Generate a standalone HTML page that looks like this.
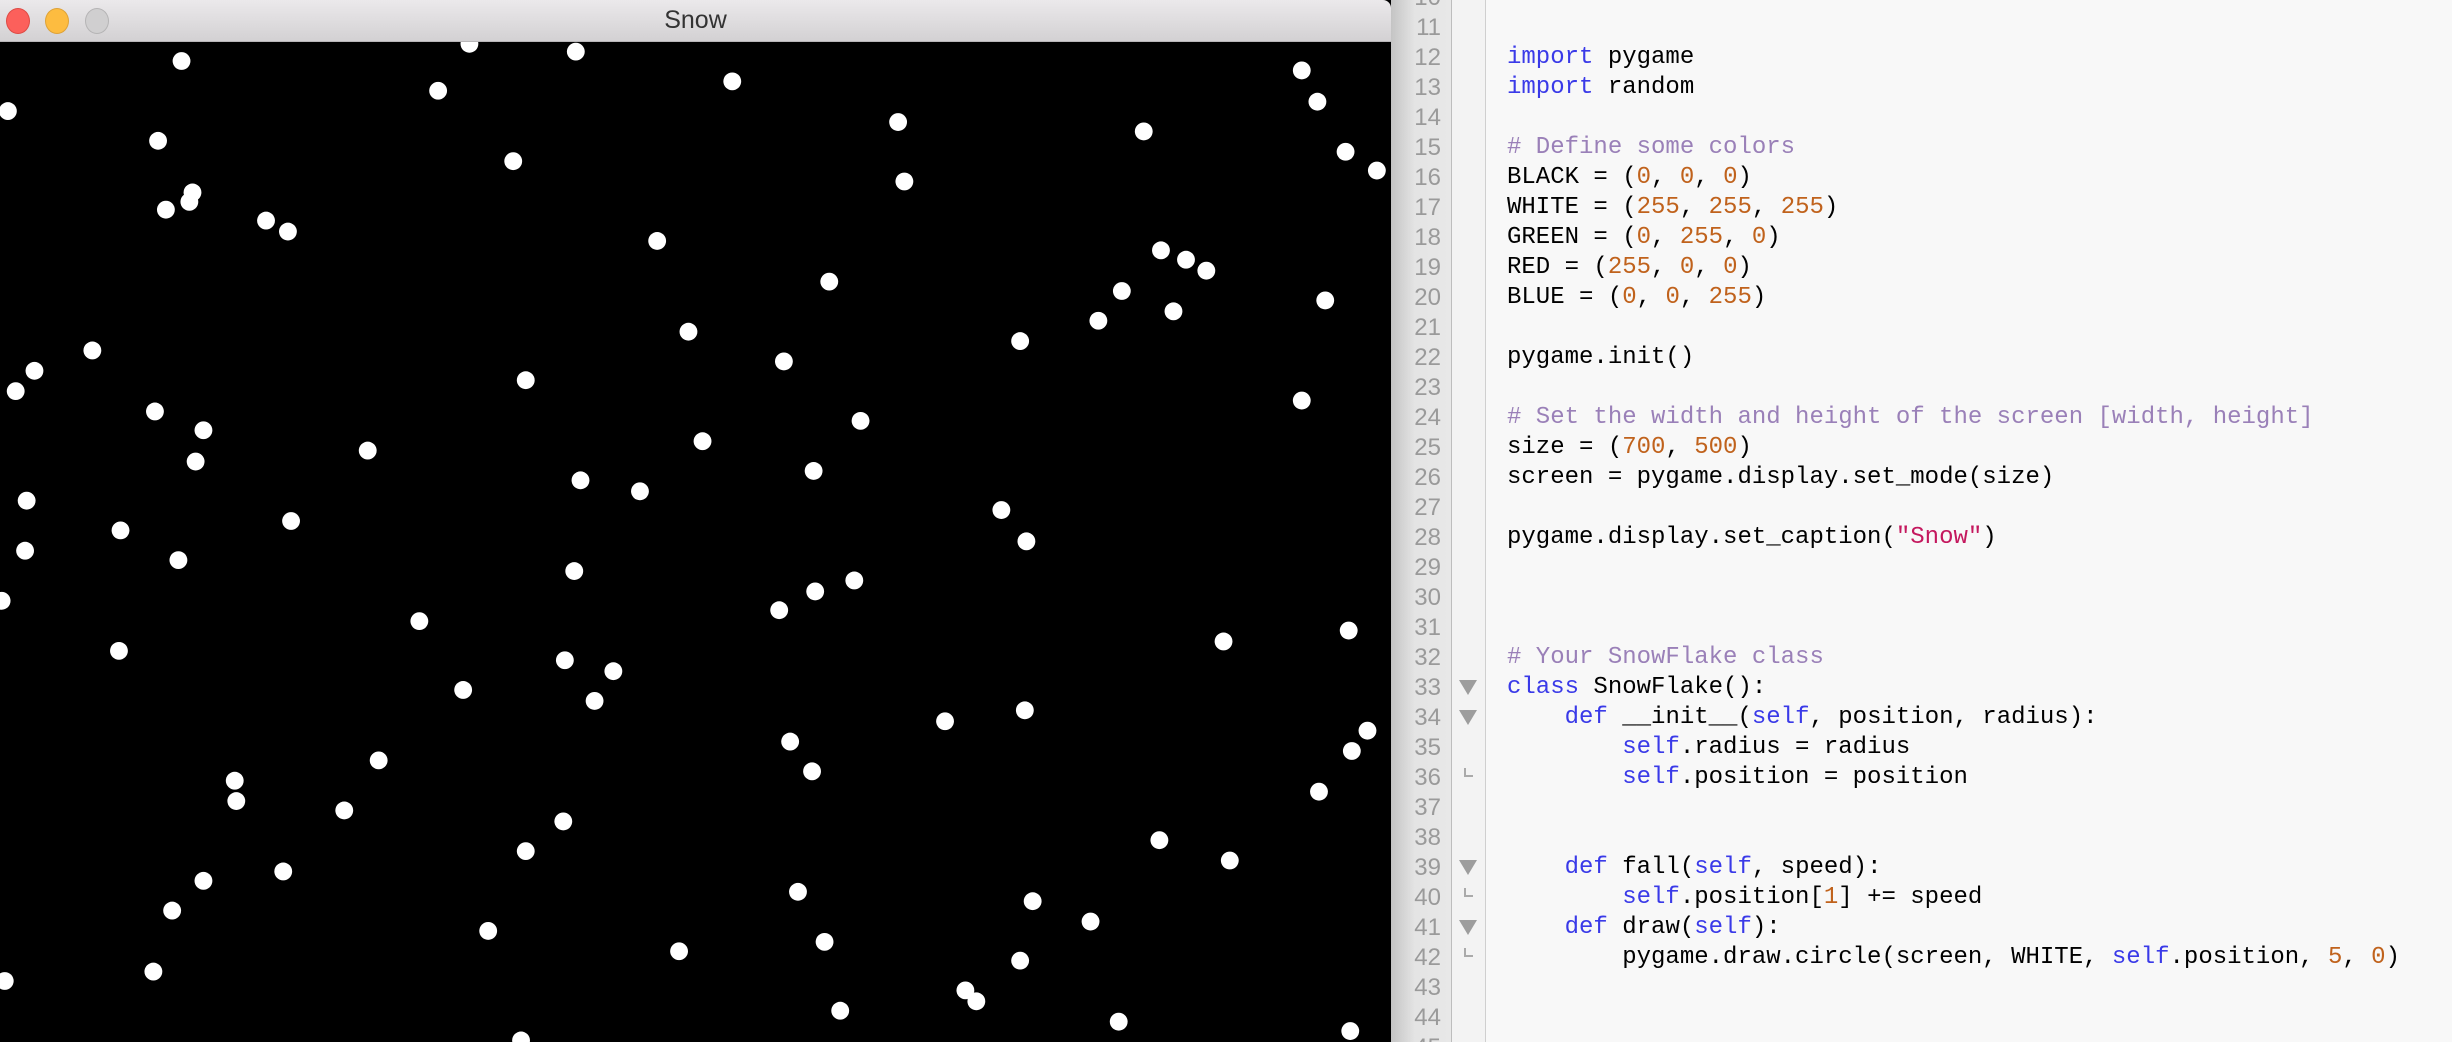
<!DOCTYPE html>
<html style="overflow:hidden;height:1042px"><head><meta charset="utf-8"><style>
body{margin:0;width:2452px;height:1042px;overflow:hidden;background:#f8f8f8;font-family:"Liberation Sans",sans-serif}
#wrap{position:relative;width:2452px;height:1042px;overflow:hidden;background:#f8f8f8}
#win{position:absolute;left:0;top:0;width:1391px;height:1042px;background:#000}
#tb{position:absolute;left:0;top:0;width:1391px;height:41px;background:linear-gradient(#ebe9eb,#d3d1d3);border-bottom:1px solid #b8b6b8;border-top-right-radius:8px}
.dot{position:absolute;top:8px;width:22px;height:24px;border-radius:50%}
#title{position:absolute;left:0;right:0;top:6px;text-align:center;font-size:25px;color:#333}
#gut{position:absolute;left:1391px;top:0;width:60px;height:1042px;background:linear-gradient(90deg,#c4c4c4,#e4e4e4 40%,#e8e8e8);border-right:1px solid #bdbdbd}
#fold{position:absolute;left:1452px;top:0;width:33px;height:1042px;background:#f3f3f3;border-right:1px solid #cfcfcf}
.ln{position:absolute;left:1391px;width:50px;text-align:right;font-size:24px;color:#9a9a9a;height:30px;line-height:30px}
.cl{position:absolute;left:1507px;font-family:"Liberation Mono",monospace;font-size:24px;white-space:pre;color:#000;height:30px;line-height:30px}
.k{color:#3a3ae8}.c{color:#9a80b8}.n{color:#c0621c}.s{color:#c4185e}
.tri{position:absolute;left:1459px;width:0;height:0;border-left:9px solid transparent;border-right:9px solid transparent;border-top:15px solid #9d9d9d}
.end{position:absolute;left:1464px;width:7px;height:7px;border-left:2px solid #aaa;border-bottom:2px solid #aaa}
</style></head><body><div id="wrap">
<div id="win">
<svg width="1391" height="1042" viewBox="0 0 889 666" style="position:absolute;left:0;top:0">
<g fill="#fff">
<circle cx="116" cy="39" r="5.7"/><circle cx="300" cy="28" r="5.7"/><circle cx="368" cy="33" r="5.7"/><circle cx="5" cy="71" r="5.7"/><circle cx="280" cy="58" r="5.7"/><circle cx="468" cy="52" r="5.7"/><circle cx="832" cy="45" r="5.7"/><circle cx="842" cy="65" r="5.7"/><circle cx="574" cy="78" r="5.7"/><circle cx="731" cy="84" r="5.7"/><circle cx="101" cy="90" r="5.7"/><circle cx="328" cy="103" r="5.7"/><circle cx="860" cy="97" r="5.7"/><circle cx="880" cy="109" r="5.7"/><circle cx="578" cy="116" r="5.7"/><circle cx="123" cy="123" r="5.7"/><circle cx="121" cy="129" r="5.7"/><circle cx="106" cy="134" r="5.7"/><circle cx="170" cy="141" r="5.7"/><circle cx="184" cy="148" r="5.7"/><circle cx="420" cy="154" r="5.7"/><circle cx="742" cy="160" r="5.7"/><circle cx="758" cy="166" r="5.7"/><circle cx="771" cy="173" r="5.7"/><circle cx="530" cy="180" r="5.7"/><circle cx="717" cy="186" r="5.7"/><circle cx="847" cy="192" r="5.7"/><circle cx="750" cy="199" r="5.7"/><circle cx="702" cy="205" r="5.7"/><circle cx="440" cy="212" r="5.7"/><circle cx="652" cy="218" r="5.7"/><circle cx="59" cy="224" r="5.7"/><circle cx="501" cy="231" r="5.7"/><circle cx="22" cy="237" r="5.7"/><circle cx="10" cy="250" r="5.7"/><circle cx="336" cy="243" r="5.7"/><circle cx="832" cy="256" r="5.7"/><circle cx="99" cy="263" r="5.7"/><circle cx="550" cy="269" r="5.7"/><circle cx="130" cy="275" r="5.7"/><circle cx="449" cy="282" r="5.7"/><circle cx="235" cy="288" r="5.7"/><circle cx="125" cy="295" r="5.7"/><circle cx="520" cy="301" r="5.7"/><circle cx="371" cy="307" r="5.7"/><circle cx="409" cy="314" r="5.7"/><circle cx="17" cy="320" r="5.7"/><circle cx="640" cy="326" r="5.7"/><circle cx="186" cy="333" r="5.7"/><circle cx="77" cy="339" r="5.7"/><circle cx="656" cy="346" r="5.7"/><circle cx="16" cy="352" r="5.7"/><circle cx="114" cy="358" r="5.7"/><circle cx="367" cy="365" r="5.7"/><circle cx="546" cy="371" r="5.7"/><circle cx="521" cy="378" r="5.7"/><circle cx="1" cy="384" r="5.7"/><circle cx="498" cy="390" r="5.7"/><circle cx="268" cy="397" r="5.7"/><circle cx="782" cy="410" r="5.7"/><circle cx="862" cy="403" r="5.7"/><circle cx="76" cy="416" r="5.7"/><circle cx="361" cy="422" r="5.7"/><circle cx="392" cy="429" r="5.7"/><circle cx="296" cy="441" r="5.7"/><circle cx="380" cy="448" r="5.7"/><circle cx="655" cy="454" r="5.7"/><circle cx="604" cy="461" r="5.7"/><circle cx="505" cy="474" r="5.7"/><circle cx="874" cy="467" r="5.7"/><circle cx="864" cy="480" r="5.7"/><circle cx="242" cy="486" r="5.7"/><circle cx="519" cy="493" r="5.7"/><circle cx="150" cy="499" r="5.7"/><circle cx="843" cy="506" r="5.7"/><circle cx="151" cy="512" r="5.7"/><circle cx="220" cy="518" r="5.7"/><circle cx="360" cy="525" r="5.7"/><circle cx="741" cy="537" r="5.7"/><circle cx="336" cy="544" r="5.7"/><circle cx="786" cy="550" r="5.7"/><circle cx="181" cy="557" r="5.7"/><circle cx="130" cy="563" r="5.7"/><circle cx="510" cy="570" r="5.7"/><circle cx="660" cy="576" r="5.7"/><circle cx="110" cy="582" r="5.7"/><circle cx="697" cy="589" r="5.7"/><circle cx="312" cy="595" r="5.7"/><circle cx="527" cy="602" r="5.7"/><circle cx="434" cy="608" r="5.7"/><circle cx="652" cy="614" r="5.7"/><circle cx="98" cy="621" r="5.7"/><circle cx="3" cy="627" r="5.7"/><circle cx="617" cy="633" r="5.7"/><circle cx="624" cy="640" r="5.7"/><circle cx="537" cy="646" r="5.7"/><circle cx="715" cy="653" r="5.7"/><circle cx="333" cy="665" r="5.7"/><circle cx="863" cy="659" r="5.7"/>
</g></svg>
<div id="tb"><div class="dot" style="left:6px;background:#fc605b;border:1px solid #de4a44"></div><div class="dot" style="left:45px;background:#fdbc40;border:1px solid #dea236"></div><div class="dot" style="left:85px;background:#d0cfd0;border:1px solid #b5b4b5"></div><div id="title">Snow</div></div>
</div>
<div id="gut"></div><div id="fold"></div>
<div class="ln" style="top:-17px">10</div><div class="ln" style="top:13px">11</div><div class="ln" style="top:43px">12</div><div class="ln" style="top:73px">13</div><div class="ln" style="top:103px">14</div><div class="ln" style="top:133px">15</div><div class="ln" style="top:163px">16</div><div class="ln" style="top:193px">17</div><div class="ln" style="top:223px">18</div><div class="ln" style="top:253px">19</div><div class="ln" style="top:283px">20</div><div class="ln" style="top:313px">21</div><div class="ln" style="top:343px">22</div><div class="ln" style="top:373px">23</div><div class="ln" style="top:403px">24</div><div class="ln" style="top:433px">25</div><div class="ln" style="top:463px">26</div><div class="ln" style="top:493px">27</div><div class="ln" style="top:523px">28</div><div class="ln" style="top:553px">29</div><div class="ln" style="top:583px">30</div><div class="ln" style="top:613px">31</div><div class="ln" style="top:643px">32</div><div class="ln" style="top:673px">33</div><div class="ln" style="top:703px">34</div><div class="ln" style="top:733px">35</div><div class="ln" style="top:763px">36</div><div class="ln" style="top:793px">37</div><div class="ln" style="top:823px">38</div><div class="ln" style="top:853px">39</div><div class="ln" style="top:883px">40</div><div class="ln" style="top:913px">41</div><div class="ln" style="top:943px">42</div><div class="ln" style="top:973px">43</div><div class="ln" style="top:1003px">44</div><div class="ln" style="top:1033px">45</div>
<div class="tri" style="top:680px"></div><div class="tri" style="top:710px"></div><div class="tri" style="top:860px"></div><div class="tri" style="top:920px"></div>
<div class="end" style="top:768px"></div><div class="end" style="top:888px"></div><div class="end" style="top:948px"></div>
<div class="cl" style="top:43px"><span class="k">import</span> pygame</div>
<div class="cl" style="top:73px"><span class="k">import</span> random</div>
<div class="cl c" style="top:133px"># Define some colors</div>
<div class="cl" style="top:163px">BLACK = (<span class="n">0</span>, <span class="n">0</span>, <span class="n">0</span>)</div>
<div class="cl" style="top:193px">WHITE = (<span class="n">255</span>, <span class="n">255</span>, <span class="n">255</span>)</div>
<div class="cl" style="top:223px">GREEN = (<span class="n">0</span>, <span class="n">255</span>, <span class="n">0</span>)</div>
<div class="cl" style="top:253px">RED = (<span class="n">255</span>, <span class="n">0</span>, <span class="n">0</span>)</div>
<div class="cl" style="top:283px">BLUE = (<span class="n">0</span>, <span class="n">0</span>, <span class="n">255</span>)</div>
<div class="cl" style="top:343px">pygame.init()</div>
<div class="cl c" style="top:403px"># Set the width and height of the screen [width, height]</div>
<div class="cl" style="top:433px">size = (<span class="n">700</span>, <span class="n">500</span>)</div>
<div class="cl" style="top:463px">screen = pygame.display.set_mode(size)</div>
<div class="cl" style="top:523px">pygame.display.set_caption(<span class="s">"Snow"</span>)</div>
<div class="cl c" style="top:643px"># Your SnowFlake class</div>
<div class="cl" style="top:673px"><span class="k">class</span> SnowFlake():</div>
<div class="cl" style="top:703px">    <span class="k">def</span> __init__(<span class="k">self</span>, position, radius):</div>
<div class="cl" style="top:733px">        <span class="k">self</span>.radius = radius</div>
<div class="cl" style="top:763px">        <span class="k">self</span>.position = position</div>
<div class="cl" style="top:853px">    <span class="k">def</span> fall(<span class="k">self</span>, speed):</div>
<div class="cl" style="top:883px">        <span class="k">self</span>.position[<span class="n">1</span>] += speed</div>
<div class="cl" style="top:913px">    <span class="k">def</span> draw(<span class="k">self</span>):</div>
<div class="cl" style="top:943px">        pygame.draw.circle(screen, WHITE, <span class="k">self</span>.position, <span class="n">5</span>, <span class="n">0</span>)</div>
</div></body></html>
